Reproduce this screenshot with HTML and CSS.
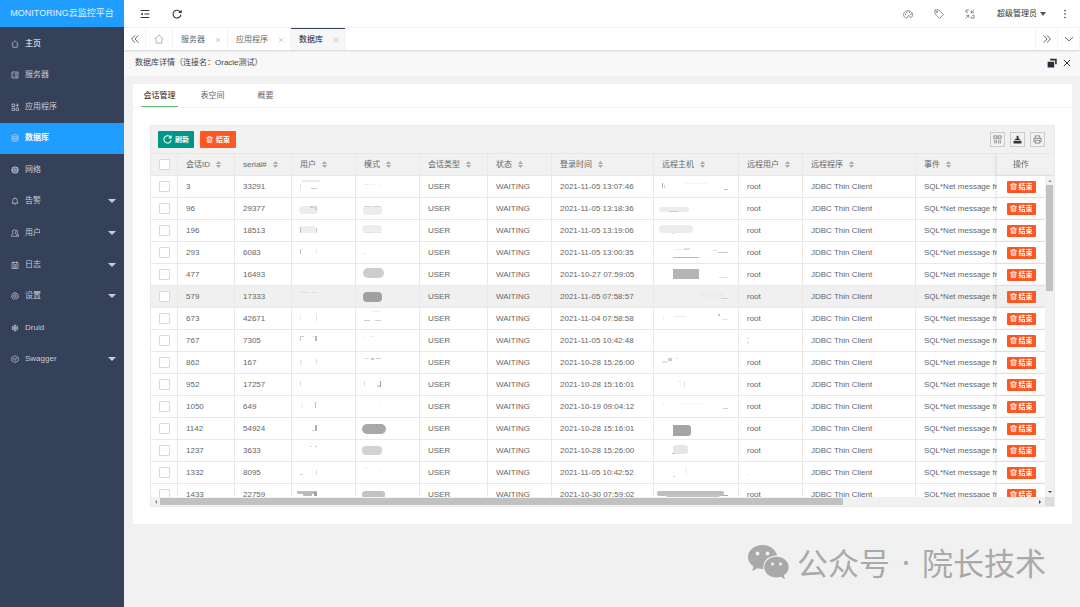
FILE: index.html
```
<!DOCTYPE html>
<html lang="zh-CN">
<head>
<meta charset="utf-8">
<title>MONITORING云监控平台</title>
<link rel="stylesheet" href="styles.css">
</head>
<body>
<div class="app">
  <aside class="sidebar">
    <h1 class="brand">MONITORING云监控平台</h1>
    <nav class="menu">
      <a class="menu-item strong" href="#"><svg class="mi" viewBox="0 0 16 16"><path d="M1 8 8 1.500 15 8M3.500 7v7.500h9V7"/></svg><span>主页</span></a>
      <a class="menu-item" href="#"><svg class="mi" viewBox="0 0 16 16"><path d="M2 2h12v12H2zM5 5h1M8 5h4M5 8h1M8 8h4M5 11h1M8 11h4"/></svg><span>服务器</span></a>
      <a class="menu-item" href="#"><svg class="mi" viewBox="0 0 16 16"><path d="M2 2h5v5H2zM2 10h5v5H2zM10 10h5v5h-5zM12.500 1v7M9 4.500h7"/></svg><span>应用程序</span></a>
      <a class="menu-item active" href="#"><svg class="mi" viewBox="0 0 16 16"><ellipse cx="8" cy="3.500" rx="6" ry="2.300"/><path d="M2 3.500v9c0 3 12 3 12 0v-9M2 6.500c0 3 12 3 12 0M2 9.500c0 3 12 3 12 0"/></svg><span>数据库</span></a>
      <a class="menu-item" href="#"><svg class="mi" viewBox="0 0 16 16"><circle cx="8" cy="8" r="6.500" fill="#c4c9d2"/><path stroke="#35405a" stroke-width=".8" d="M1.500 8h13M8 1.500v13M2.500 5h11M2.500 11h11"/><ellipse stroke="#35405a" stroke-width=".8" cx="8" cy="8" rx="3" ry="6.500"/></svg><span>网络</span></a>
      <a class="menu-item" href="#"><svg class="mi" viewBox="0 0 16 16"><path d="M1.500 12.500h13M3.500 12.500V7a4.500 4.500 0 0 1 9 0v5.500M6.500 14.500h3M8 1v1.500"/></svg><span>告警</span><i class="caret"></i></a>
      <a class="menu-item" href="#"><svg class="mi" viewBox="0 0 16 16"><path d="M1 14.500c0-3 1-4.500 3.500-5.500C1.500 5 3 1.500 6.500 1.500S11 5 8.500 9c2.500 1 3.500 2.500 3.500 5.500zM10 2.500c4 0 4 4 2 6.500 2 .8 3 2.500 3 5.500h-3"/></svg><span>用户</span><i class="caret"></i></a>
      <a class="menu-item" href="#"><svg class="mi" viewBox="0 0 16 16"><path d="M2 3h12v12H2zM5 1v4M11 1v4M4.500 7.500h7M4.500 10h7M4.500 12.500h7"/></svg><span>日志</span><i class="caret"></i></a>
      <a class="menu-item" href="#"><svg class="mi" viewBox="0 0 16 16"><path d="m6.500 1.500 3 0 .6 1.800 1.900-.6 2 2.500-1 1.800 2 1-.6 3-2 .2-.3 2-2.800 1.200L8 13l-1.500 1.400-2.800-1.200-.2-2-2-.3L1 8l2-1-1-2 2-2.300 1.900.6z"/><circle cx="8" cy="8" r="2.500"/></svg><span>设置</span><i class="caret"></i></a>
      <a class="menu-item" href="#"><svg class="mi" viewBox="0 0 16 16"><path stroke-width="1.600" d="M8 1v14M2 4.500l12 7M2 11.500l12-7M5.500 2 8 4.500 10.500 2M5.500 14 8 11.500l2.500 2.500M1.500 7.500l3-1.500M14.500 7.500l-3-1.500M1.500 9l3 1M14.500 9l-3 1"/></svg><span>Druid</span></a>
      <a class="menu-item" href="#"><svg class="mi" viewBox="0 0 16 16"><path d="M8 1.500 14.500 5v6.500L8 15l-6.500-3.500V5zM4 6.500l4 2 4-2M8 8.500V12"/></svg><span>Swagger</span><i class="caret"></i></a>
    </nav>
  </aside>

  <div class="main">
    <header class="topbar">
      <button class="icon-btn" aria-label="收起菜单"><svg class="ic dark" viewBox="0 0 16 16"><path stroke-width="1.700" d="M1 2.500h14M7 8h8M1 13.500h14"/><path fill="#333" stroke="none" d="M1 8l3.500-2.500v5z"/></svg></button>
      <button class="icon-btn" aria-label="刷新页面"><svg class="ic dark" viewBox="0 0 16 16"><path stroke-width="1.700" d="M13.500 5A6.300 6.300 0 1 0 14.300 9"/><path fill="#333" stroke="none" d="M15.500 1v5.500H10z"/></svg></button>
      <div class="top-right">
        <button class="icon-btn" aria-label="主题"><svg class="ic" viewBox="0 0 16 16"><path d="M4 14C0 12 0 6 4 4c4-3 10-1 11 4 .5 3-.5 5.500-2.500 5.500S11 10.500 9 10.500s-1 3-2.500 3.500Q5 14.500 4 14z"/><path stroke-width="2" d="M3.500 8.500h1.500M5.500 5.500H7M9.500 5H11M12 8h1.500"/></svg></button>
        <button class="icon-btn" aria-label="便签"><svg class="ic" viewBox="0 0 16 16"><path d="M1.500 1.500h6l7.500 7.500-6 6L1.500 7.500z"/><circle cx="4.800" cy="4.800" r="1"/></svg></button>
        <button class="icon-btn" aria-label="全屏"><svg class="ic" viewBox="0 0 16 16"><path d="M1.500 5V1.500H6M1.500 5h3M15 1l-5 5M10 2v4h4M1 15l5-5M2 10h4v4M14.500 10v4.500H10M14.500 10H12M10 14.500V12"/></svg></button>
        <button class="user-btn">超级管理员<i class="caret"></i></button>
        <button class="icon-btn narrow" aria-label="更多"><svg class="dots" viewBox="0 0 4 10"><circle cx="2" cy="1.500" r=".8"/><circle cx="2" cy="5" r=".8"/><circle cx="2" cy="8.500" r=".8"/></svg></button>
      </div>
    </header>

    <div class="tabbar">
      <button class="tab-nav" aria-label="向左"><svg class="ic nav" viewBox="0 0 16 16"><path d="M8 2 2.500 8 8 14M13.500 2 8 8l5.500 6"/></svg></button>
      <button class="tab-nav home" aria-label="主页"><svg class="ic pale" viewBox="0 0 16 16"><path d="M1 8 8 1.500 15 8M3.500 7v7.500h9V7"/></svg></button>
      <button class="page-tab">服务器<svg class="x" viewBox="0 0 8 8"><path d="m1 1 6 6M7 1 1 7"/></svg></button>
      <button class="page-tab">应用程序<svg class="x" viewBox="0 0 8 8"><path d="m1 1 6 6M7 1 1 7"/></svg></button>
      <button class="page-tab current">数据库<svg class="x" viewBox="0 0 8 8"><path d="m1 1 6 6M7 1 1 7"/></svg></button>
      <div class="tab-end">
        <button class="tab-nav" aria-label="向右"><svg class="ic nav" viewBox="0 0 16 16"><path d="m2.500 2 5.500 6-5.500 6M8 2l5.500 6L8 14"/></svg></button>
        <button class="tab-nav" aria-label="标签操作"><svg class="ic nav" viewBox="0 0 16 16"><path d="m1.500 5 6.500 6 6.500-6"/></svg></button>
      </div>
    </div>

    <div class="titlebar">
      <h2 class="title">数据库详情（连接名：Oracle测试）</h2>
      <button class="icon-btn" aria-label="还原"><svg class="ic" viewBox="0 0 16 16"><path fill="#2b2b3d" stroke="none" d="M5 1h10.500v9H13V4H5zM1 6h10.500v9H1z"/></svg></button>
      <button class="icon-btn" aria-label="关闭"><svg class="ic close" viewBox="0 0 16 16"><path d="m3 3 10 10M13 3 3 13"/></svg></button>
    </div>

    <main class="content">
      <section class="card">
        <div class="inner-tabs">
          <button class="inner-tab on">会话管理</button>
          <button class="inner-tab">表空间</button>
          <button class="inner-tab">概要</button>
        </div>
        <div class="card-body">
          <div class="grid">
            <div class="tools">
              <button class="btn green"><svg class="bi big" viewBox="0 0 16 16"><path d="M14 5A6.500 6.500 0 1 0 14.500 9M14.500 1v4.500H10"/></svg>刷新</button>
              <button class="btn red"><svg class="bi" viewBox="0 0 16 16"><path d="M0 4h16M5 4V1.500h6V4M3 4v10.500h10V4M6.500 6v8M9.500 6v8"/></svg>结束</button>
              <div class="tool-icons">
                <button class="tool" aria-label="筛选列"><svg class="ti" viewBox="0 0 16 16"><path d="M1.500 1.500h5.500v5H1.500zM9 1.500h5.500v5H9zM3 9v6M6 9v6M10 9v6M13 9v6"/></svg></button>
                <button class="tool" aria-label="导出"><svg class="ti" viewBox="0 0 16 16"><path fill="#333" stroke="none" d="M1 10h14v5H1zM3 9h10L11 6H9.500V4H11L8 1 5 4h2v2H5z"/></svg></button>
                <button class="tool" aria-label="打印"><svg class="ti" viewBox="0 0 16 16"><path d="M4 6V1.500h8V6M4 12H1.500V6h13v6H12M4 9.500h8v5H4z"/></svg></button>
              </div>
            </div>
            <div class="table-wrap">
              <div class="viewport">
                <table class="table">
                  <thead><tr id="head"></tr></thead>
                  <tbody id="rows"></tbody>
                </table>
              </div>
              <div class="vbar"><i class="up"></i><div class="vthumb"></div><i class="down"></i></div>
            </div>
            <div class="hbar"><i class="left"></i><div class="htrack"><div class="hthumb"></div></div><i class="right"></i><div class="corner"></div></div>
          </div>
        </div>
      </section>
    </main>
  </div>
</div>
<div class="watermark">
  <svg class="wechat" viewBox="0 0 42 36"><path fill="#a9a9a9" d="M15.500 1C7.500 1 1 6.200 1 13c0 3.900 2.100 7 5.500 9.300L5.300 27l5.200-2.800c1.800.5 3.700.8 6 .7C15.500 17.500 21 11.500 30 11.600 28.700 5.300 22.800 1 15.500 1z"/><path fill="#a9a9a9" d="M29.500 12.700c-6.900 0-12.200 4.600-12.200 10.500S22.600 33.500 29.500 33.500c1.500 0 2.900-.2 4.200-.7l4.300 2.400-1.200-3.900c3-2 4.900-4.800 4.900-8.100 0-5.900-5.300-10.500-12.200-10.500z"/><g fill="#f1f1f1"><circle cx="10.500" cy="9.500" r="1.900"/><circle cx="20.500" cy="9.500" r="1.900"/><circle cx="25.500" cy="20" r="1.600"/><circle cx="33.500" cy="20" r="1.600"/></g></svg>
  <span>公众号</span><span class="mid">·</span><span>院长技术</span>
</div>
<script src="app.js"></script>
</body>
</html>
```
FILE: styles.css
```
* { box-sizing: border-box; }
body {
  margin: 0;
  font: 8px/12px "Liberation Sans", "Noto Sans CJK SC", sans-serif;
  color: #666;
  background: #f1f1f1;
}
button { font: inherit; color: inherit; background: none; border: 0; padding: 0; }
svg { display: block; fill: none; stroke: #666; flex: none; }
h1, h2 { margin: 0; font-weight: 400; }

.app { display: flex; min-height: 100vh; }
.sidebar { width: 124px; flex: none; background: #354059; }
.brand {
  height: 27px;
  background: #209eff;
  color: #e4f2ff;
  font-size: 9px;
  line-height: 27px;
  text-align: center;
  white-space: nowrap;
}
.menu { display: grid; grid-auto-rows: 1fr; height: 348px; padding-top: 1px; }
.menu-item {
  display: flex;
  align-items: center;
  gap: 6px;
  padding: 0 8px 0 11px;
  color: #c8cdd6;
  text-decoration: none;
}
.menu-item .caret { margin-left: auto; }
.menu-item.strong { color: #fff; }
.menu-item.active { background: #209eff; color: #fff; font-weight: 700; }
.mi { width: 8px; height: 8px; stroke: #c8cdd6; stroke-width: 1.4; }
.caret { border: 4px solid transparent; border-top-color: currentColor; border-bottom: 0; }

.main { flex: 1; min-width: 0; display: flex; flex-direction: column; }
.icon-btn { display: flex; align-items: center; justify-content: center; width: 10px; }
.ic { width: 10px; height: 10px; stroke-width: 1.2; }
.ic.dark { stroke: #333; }
.ic.nav { stroke: #555; stroke-width: 1.4; }
.ic.pale { stroke: #999; }
.ic.close { stroke: #333; stroke-width: 1.6; }

.topbar {
  display: flex;
  align-items: center;
  gap: 22px;
  height: 28px;
  padding: 0 13px 0 16px;
  background: #fff;
  border-bottom: 1px solid #f4f4f4;
}
.top-right { display: flex; align-items: center; gap: 21px; margin-left: auto; }
.user-btn { display: flex; align-items: center; gap: 3px; margin: 0 -4px 0 1px; color: #333; }
.user-btn .caret { border-width: 4px 3px 0; color: #555; }
.icon-btn.narrow { width: 4px; }
.dots { width: 4px; height: 10px; fill: #333; stroke: none; }

.tabbar {
  display: flex;
  height: 22px;
  background: #fff;
  box-shadow: 0 1px 2px rgba(0, 0, 0, .15);
  position: relative;
}
.tab-nav {
  display: flex;
  align-items: center;
  justify-content: center;
  width: 22px;
  border-right: 1px solid #f4f4f4;
}
.tab-nav.home { width: 27px; }
.page-tab {
  display: flex;
  align-items: center;
  gap: 10px;
  padding: 1px 6px 0 8px;
  border-right: 1px solid #f4f4f4;
}
.page-tab.current { background: #f6f6f6; color: #222; box-shadow: inset 0 1px #354059; }
.x { width: 6px; height: 6px; stroke: #bbb; stroke-width: 1; }
.tab-end { display: flex; margin-left: auto; border-left: 1px solid #f4f4f4; }

.titlebar {
  display: flex;
  align-items: center;
  gap: 5px;
  height: 26px;
  padding: 0 8px 0 11px;
  background: #f8f8f8;
}
.title { flex: 1; font-size: 8px; line-height: 12px; color: #444; }

.content { padding: 8px 8px 8px 9px; }
.card { background: #fff; }
.inner-tabs { display: flex; gap: 16px; padding: 0 8px; border-bottom: 1px solid #f4f4f4; }
.inner-tab { width: 37px; height: 23px; padding-top: 2px; border-bottom: 1px solid transparent; }
.inner-tab.on { color: #222; border-color: #5fb878; }
.card-body { padding: 17px; }

.grid { border: 1px solid #eaeaea; }
.tools {
  display: flex;
  align-items: center;
  gap: 6px;
  height: 28px;
  padding: 0 9px 0 7px;
  background: #f1f1f1;
  border-bottom: 1px solid #e8e8e8;
}
.btn {
  display: flex;
  align-items: center;
  justify-content: center;
  gap: 3px;
  height: 17px;
  width: 36px;
  border-radius: 1px;
  color: #fff;
  font-size: 7px;
  font-weight: 700;
}
.green { background: #009688; }
.red { background: #ff5722; }
.bi { width: 7px; height: 7px; stroke: #fff; stroke-width: 1.8; }
.bi.big { width: 9px; height: 9px; }
.btn.small { height: 12px; width: 29px; gap: 2px; margin: 0 auto; }
.tool-icons { display: flex; gap: 5px; margin-left: auto; }
.tool {
  display: flex;
  align-items: center;
  justify-content: center;
  width: 15px;
  height: 15px;
  border: 1px solid #ccc;
}
.ti { width: 9px; height: 9px; stroke-width: 1.2; }

.table-wrap { position: relative; }
.viewport { height: 343px; overflow: hidden; }
.table {
  width: 100%;
  table-layout: fixed;
  border-collapse: separate;
  border-spacing: 0;
}
.table th, .table td {
  height: 22px;
  padding: 0 0 0 8px;
  border-right: 1px solid #e9e9e9;
  border-bottom: 1px solid #e9e9e9;
  text-align: left;
  font-weight: 400;
  white-space: nowrap;
  overflow: hidden;
  background: #fff;
}
.table th { background: #f1f1f1; }
.table .hover td { background: #f0f0f0; }
.table .event { border-right: 0; }
.table .op {
  position: sticky;
  right: 0;
  padding: 0 9px 0 0;
  border-right: 0;
  text-align: center;
  box-shadow: -1px 0 4px rgba(0, 0, 0, .1);
  overflow: visible;
}
.table .smudged { padding: 0; }
.smudge { width: 100%; height: 21px; stroke: none; filter: blur(0.5px); }
.check {
  display: block;
  appearance: none;
  width: 11px;
  height: 11px;
  margin: 0;
  border: 1px solid #d9d9d9;
  border-radius: 1px;
  background: #fff;
}
.label { display: flex; align-items: center; gap: 6px; }
.sort { width: 5px; height: 7px; fill: #aaa; stroke: none; }

.vbar {
  position: absolute;
  right: 0;
  top: 22px;
  bottom: 0;
  width: 9px;
  display: flex;
  flex-direction: column;
  align-items: center;
  padding: 4px 0;
  gap: 3px;
  background: #f1f1f1;
}
.vthumb { width: 7px; height: 106px; background: #c1c1c1; }
.up, .down, .left, .right { border: 2px solid transparent; }
.up { border-bottom-color: #999; border-top: 0; }
.down { border-top-color: #444; border-bottom: 0; margin-top: auto; }
.hbar { display: flex; align-items: center; height: 9px; background: #f1f1f1; }
.left { border-right-color: #888; border-left: 0; margin: 0 3px 0 4px; }
.right { border-left-color: #444; border-right: 0; margin: 0 4px; }
.htrack { flex: 1; }
.hthumb { width: 78%; height: 7px; background: #c1c1c1; }
.corner { width: 9px; height: 9px; background: #dcdcdc; }

.watermark {
  position: absolute;
  right: 34px;
  bottom: 23px;
  display: flex;
  align-items: center;
  gap: 8px;
  color: #a9a9a9;
  font: 31px/44px "Noto Sans CJK SC", sans-serif;
}
.mid { width: 16px; text-align: center; font-family: "Noto Sans", sans-serif; }
.wechat { width: 42px; height: 36px; stroke: none; }
```
FILE: app.js
```
const columns = [
  ['', 27], ['会话ID', 57], ['serial#', 57], ['用户', 64], ['模式', 64],
  ['会话类型', 68], ['状态', 64], ['登录时间', 102], ['远程主机', 85],
  ['远程用户', 64], ['远程程序', 113], ['事件', 0], ['操作', 57]
];

// Masked values are lists of strokes: x, y, width, height, grey level, corner radius.
const rows = [
  ['3', '33291', '2021-11-05 13:07:46', [[10,4,18,2,235,1],[8,8,1,5,225,0],[19,12,6,1,200,0]], [[8,8,5,1,235,0],[16,8,4,1,240,0],[23,8,2,1,240,0]], [[8,7,1,5,180,0],[10,9,1,3,210,0],[30,7,24,1,245,0],[70,13,4,1,190,0]]],
  ['96', '29377', '2021-11-05 13:18:36', [[7,8,19,8,236,4],[18,8,4,2,205,0],[23,8,2,4,210,0]], [[7,8,19,9,236,4],[8,8,7,1,215,0],[18,8,7,1,210,0]], [[5,9,30,5,236,2],[15,13,9,1,205,0]]],
  ['196', '18513', '2021-11-05 13:19:06', [[8,6,16,7,238,3],[8,7,1,6,190,0],[24,8,1,5,200,0]], [[6,5,20,8,238,4],[9,12,9,1,225,0],[21,12,4,1,225,0]], [[5,5,34,8,236,4],[18,13,3,1,225,0]]],
  ['293', '6083', '2021-11-05 13:00:35', [[8,7,1,5,190,0],[10,7,1,1,220,0],[24,7,1,4,230,0]], [[8,11,2,1,225,0]], [[21,7,8,1,235,0],[30,6,6,2,225,0],[19,15,26,1,185,0],[58,8,5,1,230,0],[64,10,10,1,200,0]]],
  ['477', '16493', '2021-10-27 07:59:05', [], [[7,4,21,10,205,5]], [[19,5,26,10,180,0],[65,13,9,1,225,0]]],
  ['579', '17333', '2021-11-05 07:58:57', [[8,6,10,1,225,0],[20,6,5,1,225,0]], [[7,6,19,10,160,4]], [[45,6,24,5,236,2],[67,12,7,1,210,0]]],
  ['673', '42671', '2021-11-04 07:58:58', [[8,8,1,5,235,0],[24,7,1,6,225,0]], [[8,12,6,1,205,0],[19,12,6,1,205,0],[16,3,9,1,240,0]], [[9,9,1,4,240,0],[20,8,12,1,235,0],[64,6,2,2,195,0],[68,11,6,1,230,0]]],
  ['767', '7305', '2021-11-05 10:42:48', [[8,6,1,5,200,0],[9,6,3,1,205,0],[20,6,2,1,230,0],[23,6,2,5,185,0]], [[8,6,1,3,238,0],[13,6,5,1,238,0]], [], [[8,8,3,1,225,0],[8,11,2,3,238,0]]],
  ['862', '167', '2021-10-28 15:26:00', [[8,8,2,5,235,0],[24,7,1,5,220,0]], [[8,6,5,1,220,0],[15,6,3,2,200,0],[20,6,5,1,200,0]], [[8,9,5,2,225,0],[14,6,4,3,205,0],[22,6,2,1,225,0]]],
  ['952', '17257', '2021-10-28 15:16:01', [[8,7,1,5,220,0]], [[8,7,1,5,220,0],[21,11,3,2,210,0],[24,7,1,6,160,0]], [[24,7,3,1,235,0],[30,7,1,6,225,0]]],
  ['1050', '649', '2021-10-19 09:04:12', [[9,8,2,5,245,0],[23,6,1,6,190,0]], [[24,8,1,3,240,0]], [[9,7,1,1,220,0],[24,7,28,1,247,0],[69,12,5,1,205,0]]],
  ['1142', '54924', '2021-10-28 15:16:01', [[20,12,2,1,205,0],[23,7,2,6,175,0]], [[6,6,24,10,168,5]], [[19,7,18,11,165,3],[19,7,8,11,165,0]]],
  ['1237', '3633', '2021-10-28 15:26:00', [[18,6,2,1,220,0],[23,6,2,1,205,0]], [[6,6,20,9,210,4]], [[19,5,15,9,230,3],[18,13,3,1,190,0]]],
  ['1332', '8095', '2021-11-05 10:42:52', [[8,12,3,1,205,0],[24,8,1,5,220,0]], [[8,5,5,1,240,0],[24,8,1,3,240,0]], [[19,14,2,1,215,0],[31,6,2,7,245,0]], [[9,12,2,1,235,0]]],
  ['1433', '22759', '2021-10-30 07:59:02', [[5,7,20,3,190,1],[11,9,9,3,185,1],[22,8,3,4,160,0]], [[6,7,23,7,195,3]], [[3,7,67,5,190,2],[12,10,54,3,195,2],[69,11,5,1,170,0]]]
];

const sortIcon = '<svg class="sort" viewBox="0 0 5 7"><path d="M0 3 2.500 0 5 3zM0 4h5L2.500 7z"/></svg>';
const trash = '<svg class="bi" viewBox="0 0 16 16"><path d="M0 4h16M5 4V1.500h6V4M3 4v10.500h10V4M6.500 6v8M9.500 6v8"/></svg>';
const check = name => `<input class="check" type="checkbox" aria-label="${name}">`;
const masked = marks => '<td class="smudged"><svg class="smudge">' + marks.map(([x, y, w, h, g, r]) =>
  `<rect x="${x}" y="${y}" width="${w}" height="${h}" rx="${r}" fill="rgb(${g},${g},${g})"/>`).join('') + '</svg></td>';

document.getElementById('head').innerHTML = columns.map(([name, width], i) => {
  const last = i === columns.length - 1;
  const body = i === 0 ? check('全选') : last ? name : `<span class="label">${name}${sortIcon}</span>`;
  const size = width ? ` style="width:${width}px"` : ' class="event"';
  return `<th${size}${last ? ' class="op"' : ''}>${body}</th>`;
}).join('');

document.getElementById('rows').innerHTML = rows.map(([id, serial, time, user, mode, host, remote]) =>
  `<tr${id === '579' ? ' class="hover"' : ''}><td>${check('选择 ' + id)}</td><td>${id}</td><td>${serial}</td>` +
  masked(user) + masked(mode) + `<td>USER</td><td>WAITING</td><td>${time}</td>` + masked(host) +
  (remote ? masked(remote) : '<td>root</td>') +
  '<td>JDBC Thin Client</td><td class="event">SQL*Net message fr</td>' +
  `<td class="op"><button class="btn red small">${trash}结束</button></td></tr>`).join('');
```
